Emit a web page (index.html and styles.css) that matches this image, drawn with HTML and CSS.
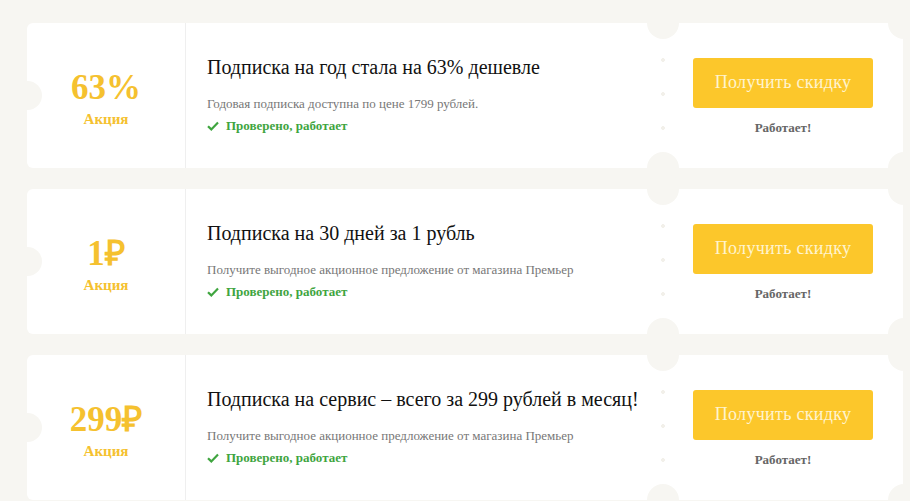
FILE: index.html
```html
<!DOCTYPE html>
<html lang="ru">
<head>
<meta charset="utf-8">
<title>Акции</title>
<link rel="stylesheet" href="styles.css">
</head>
<body>
<div class="list">
  <div class="coupon">
    <div class="c-left">
      <div class="amount">63%</div>
      <div class="kind">Акция</div>
    </div>
    <div class="c-mid">
      <div class="title">Подписка на год стала на 63% дешевле</div>
      <div class="desc">Годовая подписка доступна по цене 1799 рублей.</div>
      <div class="check"><svg class="tick" viewBox="0 0 12 10" width="12" height="10"><path d="M1 5.2 L4.3 8.4 L11 1.6" fill="none" stroke="#3fa53f" stroke-width="2.2"/></svg>Проверено, работает</div>
    </div>
    <div class="c-right">
      <a class="btn">Получить скидку</a>
      <div class="works">Работает!</div>
    </div>
  </div>
  <div class="coupon">
    <div class="c-left">
      <div class="amount">1₽</div>
      <div class="kind">Акция</div>
    </div>
    <div class="c-mid">
      <div class="title">Подписка на 30 дней за 1 рубль</div>
      <div class="desc">Получите выгодное акционное предложение от магазина Премьер</div>
      <div class="check"><svg class="tick" viewBox="0 0 12 10" width="12" height="10"><path d="M1 5.2 L4.3 8.4 L11 1.6" fill="none" stroke="#3fa53f" stroke-width="2.2"/></svg>Проверено, работает</div>
    </div>
    <div class="c-right">
      <a class="btn">Получить скидку</a>
      <div class="works">Работает!</div>
    </div>
  </div>
  <div class="coupon">
    <div class="c-left">
      <div class="amount">299₽</div>
      <div class="kind">Акция</div>
    </div>
    <div class="c-mid">
      <div class="title">Подписка на сервис – всего за 299 рублей в месяц!</div>
      <div class="desc">Получите выгодное акционное предложение от магазина Премьер</div>
      <div class="check"><svg class="tick" viewBox="0 0 12 10" width="12" height="10"><path d="M1 5.2 L4.3 8.4 L11 1.6" fill="none" stroke="#3fa53f" stroke-width="2.2"/></svg>Проверено, работает</div>
    </div>
    <div class="c-right">
      <a class="btn">Получить скидку</a>
      <div class="works">Работает!</div>
    </div>
  </div>
</div>
</body>
</html>
```

FILE: styles.css
```css
html { overflow: hidden; }
body {
  margin: 0;
  background: #f7f6f2;
  font-family: "Liberation Serif", "Times New Roman", serif;
}
.list {
  display: flex;
  flex-direction: column;
  gap: 21px;
  padding: 23px 7px 0 27px;
}
.coupon {
  position: relative;
  display: flex;
  height: 145px;
  background: #fff;
  border-radius: 6px;
  flex-shrink: 0;
}
.coupon::before {
  content: "";
  position: absolute;
  left: -14px;
  top: 58px;
  width: 29px;
  height: 29px;
  border-radius: 50%;
  background: #f7f6f2;
}
.coupon::after {
  content: "";
  position: absolute;
  right: -17px;
  top: -16px;
  width: 32px;
  height: 32px;
  border-radius: 50%;
  background: #f7f6f2;
  box-shadow: 0 145px 0 #f7f6f2;
}
.c-left {
  width: 159px;
  border-right: 1px solid #efefef;
  display: flex;
  flex-direction: column;
  align-items: center;
  justify-content: center;
  color: #f5c12f;
  font-weight: bold;
  padding-top: 6px;
  box-sizing: border-box;
}
.amount {
  font-size: 35px;
  line-height: 36px;
}
.kind {
  font-size: 15px;
  line-height: 18px;
  margin-top: 4px;
}
.c-mid {
  flex: 1;
  padding-left: 21px;
  padding-bottom: 2px;
  display: flex;
  flex-direction: column;
  justify-content: center;
}
.title {
  font-size: 20px;
  line-height: 22px;
  color: #111;
}
.desc {
  font-size: 13px;
  line-height: 16px;
  color: #777;
  margin-top: 18px;
}
.check {
  display: flex;
  align-items: center;
  gap: 7px;
  font-size: 13px;
  line-height: 16px;
  font-weight: bold;
  color: #3fa53f;
  margin-top: 6px;
}
.tick { display: block; }
.c-right {
  position: relative;
  width: 240px;
  display: flex;
  flex-direction: column;
  align-items: center;
  justify-content: center;
  padding-top: 2px;
  box-sizing: border-box;
}
.c-right::before {
  content: "";
  position: absolute;
  left: -16px;
  top: -16px;
  width: 32px;
  height: 32px;
  border-radius: 50%;
  background: #f7f6f2;
  box-shadow: 0 145px 0 #f7f6f2;
}
.c-right::after {
  content: "";
  position: absolute;
  left: -2px;
  top: 20px;
  width: 4px;
  height: 106px;
  background: radial-gradient(circle, #f2f0ea 1.6px, transparent 2.2px) 0 0 / 4px 34px repeat-y;
}
.btn {
  display: flex;
  align-items: center;
  justify-content: center;
  width: 180px;
  height: 50px;
  background: #fcc72b;
  border-radius: 3px;
  color: #fff4cf;
  font-size: 18px;
  letter-spacing: 0.3px;
}
.works {
  margin-top: 12px;
  font-size: 13px;
  font-weight: bold;
  color: #666;
}
```
